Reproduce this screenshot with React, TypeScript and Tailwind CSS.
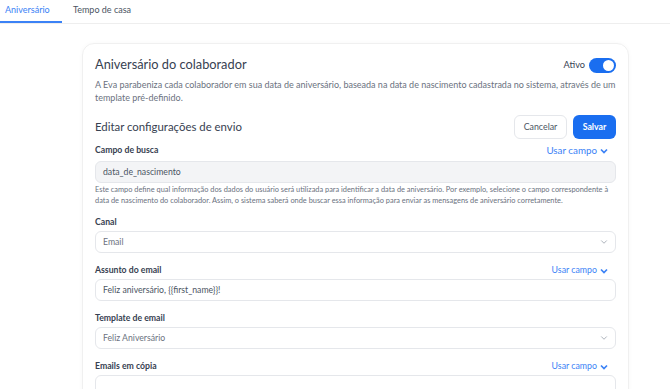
import { ChevronDown } from "lucide-react";

const font = { fontFamily: 'Lato, "Noto Sans", sans-serif' };

function UsarCampo({ big }: { big?: boolean }) {
  return (
    <button
      className={
        "flex items-center gap-[3px] text-[#3b82f6] pr-[8px] " + (big ? "text-[9.8px]" : "text-[8.8px]")
      }
    >
      Usar campo
      <svg width="8" height="6" viewBox="0 0 8 6" className="mt-[1px]">
        <path d="M1 1.5 L4 4.5 L7 1.5" fill="none" stroke="currentColor" strokeWidth="1.7" />
      </svg>
    </button>
  );
}

function Label({ text, extra }: { text: string; extra?: boolean }) {
  return (
    <div className="flex items-center justify-between h-[16px] mb-[1px]">
      <span className="text-[8.7px] font-bold text-[#374151]">{text}</span>
      {extra && <UsarCampo />}
    </div>
  );
}

function Select({ value }: { value: string }) {
  return (
    <div className="flex items-center justify-between h-[22px] rounded-md border border-[#e5e7eb] bg-white pl-[7px] pr-[6px]">
      <span className="text-[8.7px] text-[#6b7280]">{value}</span>
      <ChevronDown size={10} className="text-[#9ca3af]" />
    </div>
  );
}

function Input({ value, gray }: { value: string; gray?: boolean }) {
  return (
    <div
      className={
        "flex items-center h-[22px] rounded-md border border-[#e5e7eb] pl-[7px] " +
        (gray ? "bg-[#f3f4f6]" : "bg-white")
      }
    >
      <span className="text-[8.7px] text-[#4b5563]">{value}</span>
    </div>
  );
}

export default function App() {
  return (
    <div className="min-h-screen bg-white" style={font}>
      <div className="flex h-[24px] border-b border-[#eeeeee]">
        <div className="w-[62px] border-b-2 border-[#3b82f6] pl-[5px] pt-[3px] text-[9px] text-[#3b82f6]">
          Aniversário
        </div>
        <div className="pl-[11px] pt-[3px] text-[9px] text-[#4b5563]">Tempo de casa</div>
      </div>

      <div className="pl-[82px] pr-[41px] pt-[19px]">
        <div className="rounded-xl border border-[#f0f0f0] shadow-[0_0_4px_rgba(0,0,0,0.03)] px-[12px] pt-[13px] pb-4">
          <div className="flex items-center justify-between h-[16px]">
            <h1 className="text-[12.8px] text-[#374151]">Aniversário do colaborador</h1>
            <div className="flex items-center gap-[4px]">
              <span className="text-[9.2px] text-[#374151]">Ativo</span>
              <div className="flex items-center justify-end w-[27px] h-[15px] rounded-full bg-[#1a6ef0] pr-[2px]">
                <div className="w-[11px] h-[11px] rounded-full bg-white" />
              </div>
            </div>
          </div>

          <p className="mt-[5px] text-[9px] leading-[13px] text-[#6b7280]">
            A Eva parabeniza cada colaborador em sua data de aniversário, baseada na data de nascimento
            cadastrada no sistema, através de um template pré-definido.
          </p>

          <div className="mt-[11px] flex items-center justify-between">
            <h2 className="text-[11.4px] text-[#374151]">Editar configurações de envio</h2>
            <div className="flex gap-[6px]">
              <button className="h-[24px] w-[53px] rounded-md border border-[#e5e7eb] text-[8.8px] text-[#4b5563]">
                Cancelar
              </button>
              <button className="h-[24px] w-[43px] rounded-md bg-[#1a6ef0] text-[8.8px] font-bold text-white">
                Salvar
              </button>
            </div>
          </div>

          <div className="mt-[2px]">
            <div className="flex items-center justify-between h-[18px] mb-[2px]">
              <span className="text-[8.7px] font-bold text-[#374151]">Campo de busca</span>
              <UsarCampo big />
            </div>
            <Input value="data_de_nascimento" gray />
            <p className="mt-[1px] text-[7.4px] leading-[11px] text-[#6b7280]">
              Este campo define qual informação dos dados do usuário será utilizada para identificar a data
              de aniversário. Por exemplo, selecione o campo correspondente à data de nascimento do
              colaborador. Assim, o sistema saberá onde buscar essa informação para enviar as mensagens de
              aniversário corretamente.
            </p>
          </div>

          <div className="mt-[8px]">
            <Label text="Canal" />
            <Select value="Email" />
          </div>

          <div className="mt-[9px]">
            <Label text="Assunto do email" extra />
            <Input value="Feliz aniversário, {{first_name}}!" />
          </div>

          <div className="mt-[9px]">
            <Label text="Template de email" />
            <Select value="Feliz Aniversário" />
          </div>

          <div className="mt-[9px]">
            <Label text="Emails em cópia" extra />
            <Input value="" />
          </div>
        </div>
      </div>
    </div>
  );
}
